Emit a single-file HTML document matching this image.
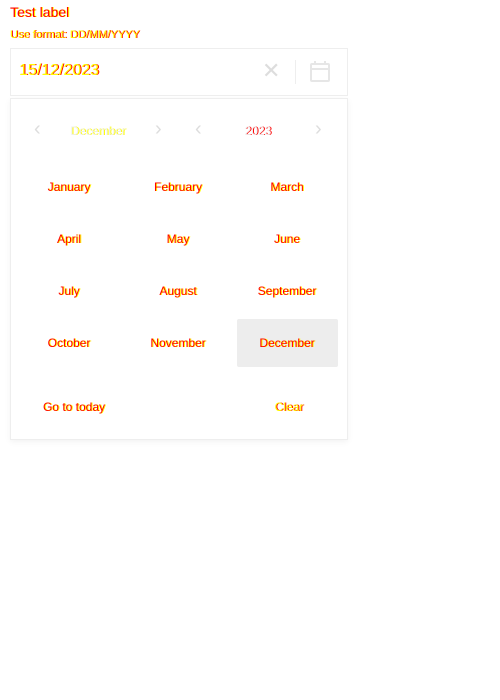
<!DOCTYPE html><html><head><style>
body{margin:0;width:500px;height:700px;background:#fff;font-family:"Liberation Sans",sans-serif;position:relative}
.t{position:absolute;color:#f00;text-shadow:1px 0 #ff0;white-space:nowrap}
.y{color:#ff0;text-shadow:1px 0 #f00}
.c{transform:translateX(-50%)}
.box{position:absolute;border:1px solid #eee;box-sizing:border-box;background:#fff}
.chev{position:absolute;color:#ddd;font-size:20px}
</style></head><body>
<div class="t" style="left:10px;top:4px;font-size:14px">Test label</div>
<div class="t y" style="left:10px;top:29px;font-size:11px">Use format: DD/MM/YYYY</div>
<div class="box" style="left:10px;top:48px;width:338px;height:48px"></div>
<div class="t y" style="left:19px;top:62px;font-size:16px">15/12/2023</div>
<div class="chev" style="left:262px;top:58px;font-size:22px;color:#ddd">✕</div>
<div style="position:absolute;left:295px;top:60px;width:1px;height:24px;background:#eee"></div>
<svg style="position:absolute;left:309px;top:61px" width="22" height="22" viewBox="0 0 22 22"><rect x="2" y="3" width="18" height="17" rx="1" fill="none" stroke="#e6e6e6" stroke-width="2"/><line x1="2" y1="8" x2="20" y2="8" stroke="#e6e6e6" stroke-width="2"/><line x1="6" y1="0" x2="6" y2="4" stroke="#e6e6e6" stroke-width="2"/><line x1="16" y1="0" x2="16" y2="4" stroke="#e6e6e6" stroke-width="2"/></svg>
<div class="box" style="left:10px;top:98px;width:338px;height:342px;box-shadow:0 2px 6px rgba(0,0,0,.05)"></div>
<div class="chev" style="left:34px;top:118px">‹</div>
<div class="t c" style="left:98px;top:124px;font-size:12px;color:#eee;text-shadow:1px 0 #ff0">December</div>
<div class="chev" style="left:155px;top:118px">›</div>
<div class="chev" style="left:195px;top:118px">‹</div>
<div class="t c y" style="left:258px;top:124px;font-size:12px;color:#eee">2023</div>
<div class="chev" style="left:315px;top:118px">›</div>
<div style="position:absolute;left:237px;top:319px;width:101px;height:48px;background:#ededed;border-radius:2px"></div>
<div class="t c" style="left:69px;top:180px;font-size:12px">January</div>
<div class="t c" style="left:178px;top:180px;font-size:12px">February</div>
<div class="t c" style="left:287px;top:180px;font-size:12px">March</div>
<div class="t c" style="left:69px;top:232px;font-size:12px">April</div>
<div class="t c" style="left:178px;top:232px;font-size:12px">May</div>
<div class="t c" style="left:287px;top:232px;font-size:12px">June</div>
<div class="t c" style="left:69px;top:284px;font-size:12px">July</div>
<div class="t c" style="left:178px;top:284px;font-size:12px">August</div>
<div class="t c" style="left:287px;top:284px;font-size:12px">September</div>
<div class="t c" style="left:69px;top:336px;font-size:12px">October</div>
<div class="t c" style="left:178px;top:336px;font-size:12px">November</div>
<div class="t c" style="left:287px;top:336px;font-size:12px">December</div>
<div class="t c" style="left:74px;top:400px;font-size:12px">Go to today</div>
<div class="t c y" style="left:289px;top:400px;font-size:12px">Clear</div>
</body></html>
